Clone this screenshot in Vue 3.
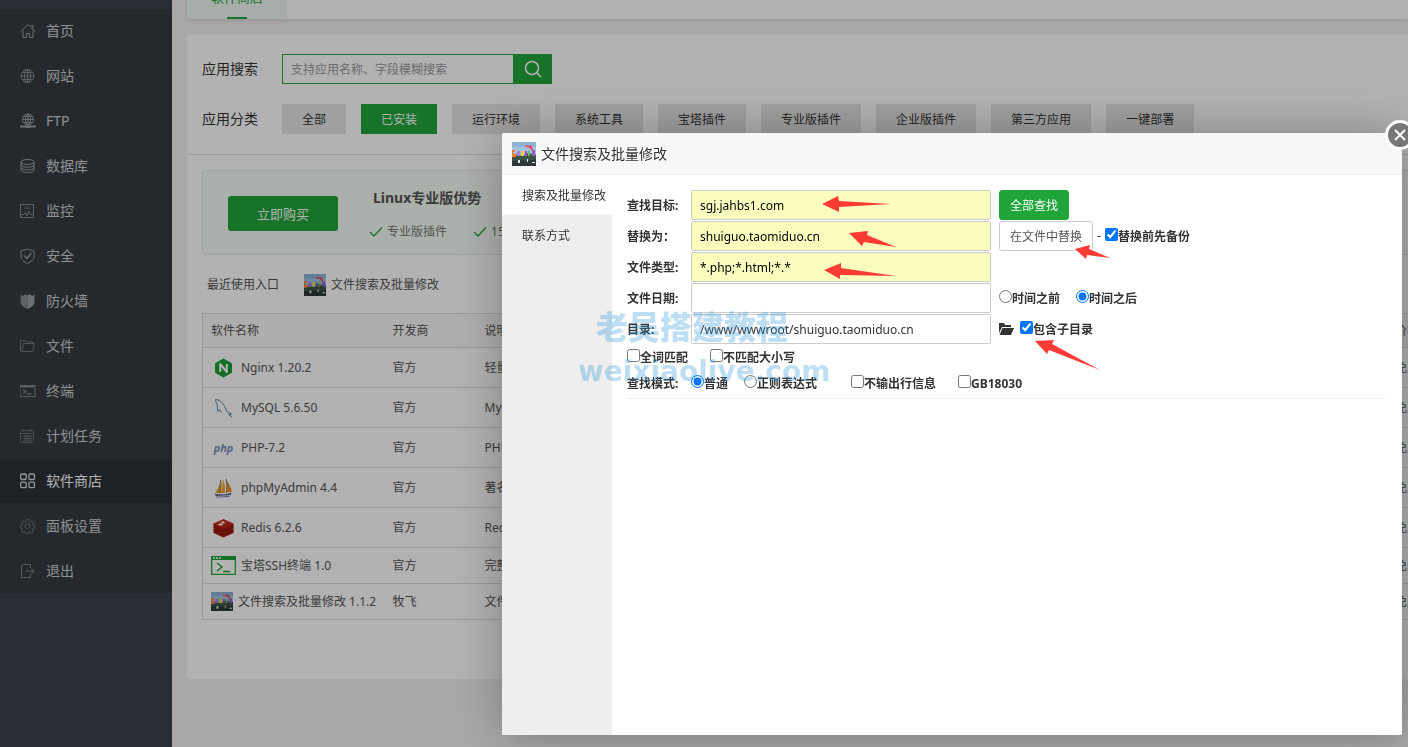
<script setup>
import { ref } from 'vue'

const menu = [
  { icon: 'home', text: '首页' },
  { icon: 'globe', text: '网站' },
  { icon: 'ftp', text: 'FTP' },
  { icon: 'database', text: '数据库' },
  { icon: 'monitor', text: '监控' },
  { icon: 'shield', text: '安全' },
  { icon: 'firewall', text: '防火墙' },
  { icon: 'folder', text: '文件' },
  { icon: 'terminal', text: '终端' },
  { icon: 'calendar', text: '计划任务' },
  { icon: 'apps', text: '软件商店', active: true },
  { icon: 'gear', text: '面板设置' },
  { icon: 'exit', text: '退出' }
]

const categories = ['全部', '已安装', '运行环境', '系统工具', '宝塔插件', '专业版插件', '企业版插件', '第三方应用', '一键部署']
const activeCategory = ref('已安装')

const software = [
  { icon: 'nginx', name: 'Nginx 1.20.2', vendor: '官方', desc: '轻量级，占有内存少，并发能力强' },
  { icon: 'mysql', name: 'MySQL 5.6.50', vendor: '官方', desc: 'MySQL是一种关系数据库管理系统!' },
  { icon: 'php', name: 'PHP-7.2', vendor: '官方', desc: 'PHP是世界上最好的编程语言' },
  { icon: 'pma', name: 'phpMyAdmin 4.4', vendor: '官方', desc: '著名Web端MySQL管理工具' },
  { icon: 'redis', name: 'Redis 6.2.6', vendor: '官方', desc: 'Redis 是一个高性能的key-value数据库' },
  { icon: 'ssh', name: '宝塔SSH终端 1.0', vendor: '官方', desc: '完整功能的SSH客户端', slim: true },
  { icon: 'photo', name: '文件搜索及批量修改 1.1.2', vendor: '牧飞', desc: '文件搜索及批量修改', slim: true }
]

const find = ref('sgj.jahbs1.com')
const replace = ref('shuiguo.taomiduo.cn')
const types = ref('*.php;*.html;*.*')
const date = ref('')
const dir = ref('/www/wwwroot/shuiguo.taomiduo.cn')
const backup = ref(true)
const subdirs = ref(true)
const when = ref('after')
const whole = ref(false)
const ignoreCase = ref(false)
const mode = ref('plain')
const noLines = ref(false)
const gb = ref(false)
</script>

<template>
  <svg class="defs" aria-hidden="true">
    <symbol id="photo" viewBox="0 0 24 24" preserveAspectRatio="none">
      <rect width="24" height="24" fill="#8fb4d6" />
      <rect y="5" width="24" height="6" fill="#a3c3dd" />
      <path d="M0 15l5-2 6 1 5-3 8 2v11H0z" fill="#3d5546" />
      <path d="M0 19l8-1 7 1 9-2v7H0z" fill="#2b3a38" />
      <path d="M0 8h3v2H1v2h3v3H0z" fill="#ff7a2e" />
      <path d="M5 9h3v5H5z" fill="#b07cd8" />
      <path d="M9 9h3v5H9z" fill="#e0d83e" />
      <path d="M13 9h2v5h-2z" fill="#a64bd0" />
      <path d="M16 9h2v5h-2z" fill="#52c45a" />
      <path d="M20 8h3v6h-3z" fill="#9c55cf" />
      <path d="M13 4l2-1 2 1 2-1 1 2 1 3-1 1-2-3-4-1z" fill="#e8455e" />
      <path d="M6 18h2v3H6zM15 17h1v3h-1zM20 20h3v1h-3z" fill="#e8eeee" />
    </symbol>
  </svg>

  <div class="page">
    <nav class="sidebar">
      <ul>
        <li v-for="m in menu" :key="m.text">
          <a href="#" :class="{ active: m.active }">
            <svg viewBox="0 0 16 16" width="16" height="16" fill="none" stroke="currentColor">
              <template v-if="m.icon === 'home'">
                <path d="M1 8.500L8 1.500l7 7M11 2.500h2v3M3 7.500V14.500h3.500V10.500h3V14.500H13V7.500" />
              </template>
              <template v-else-if="m.icon === 'globe'">
                <g opacity=".8"><circle cx="7.500" cy="8" r="6.500" />
                <ellipse cx="7.500" cy="8" rx="3" ry="6.500" />
                <path d="M1 8h13M7.500 1.500v13M2.500 4.500h10M2.500 11.500h10" /></g>
              </template>
              <template v-else-if="m.icon === 'ftp'">
                <circle cx="8" cy="6.500" r="5.500" />
                <ellipse cx="8" cy="6.500" rx="2.500" ry="5.500" />
                <path d="M2.500 6.500h11M8 1v11M3.500 3.500h9M3.500 9.500h9" />
                <path d="M0 13.500h16M6 14h4" stroke-width="2" />
              </template>
              <template v-else-if="m.icon === 'database'">
                <ellipse cx="7.500" cy="4" rx="6.500" ry="2.500" />
                <path d="M1 4v8c0 3.300 13 3.300 13 0V4M1 6.700c0 3.300 13 3.300 13 0M1 9.400c0 3.300 13 3.300 13 0" />
              </template>
              <template v-else-if="m.icon === 'monitor'">
                <g opacity=".8"><rect x="0.500" y="1.500" width="13" height="13" />
                <path d="M4 4h6M4 5.500h6" opacity=".5" />
                <path d="M1 11.500h3l1.500-2 1.500 3.500 2-5 1.500 3.500H13" /></g>
              </template>
              <template v-else-if="m.icon === 'shield'">
                <path d="M7.500 1L14 3v5c0 3.500-3 6-6.500 7.500C4 14 1 11.500 1 8V3z" />
                <path d="M4 7.500l3 3L11.500 5" stroke-width="1.500" />
              </template>
              <template v-else-if="m.icon === 'firewall'">
                <path d="M7.500 16C3 14 .500 12 .500 8.500V2h1.500v1h1.500V2H5V1h1V2h1.500z" fill="currentColor" stroke="none" opacity=".8" />
                <path d="M7.500 16C12 14 14.500 12 14.500 8.500V2H13v1h-1.500V2H10V1H9V2H7.500z" fill="currentColor" stroke="none" />
              </template>
              <template v-else-if="m.icon === 'folder'">
                <g opacity=".6"><path d="M2 13.500H12.500L14.500 5.500H3.500L2 13.500L.500 13V2.500H5L6.500 4H12.500V5.500" /></g>
              </template>
              <template v-else-if="m.icon === 'terminal'">
                <g opacity=".75"><rect x="0" y="2.500" width="15" height="11" /><path d="M0 3.500h15" stroke-width="2" /><path d="M3 6.500l3 2-3 2M7 11h4" stroke-width="1.300" /></g>
              </template>
              <template v-else-if="m.icon === 'calendar'">
                <g opacity=".5"><rect x=".500" y="2.500" width="13" height="12" rx="1" /><path d="M.500 5.500h13M3.500 1v3M10.500 1v3M3 8h9M3 10.500h9M3 13h9M5 7v6M7.500 7v6M10 7v6" /></g>
              </template>
              <template v-else-if="m.icon === 'apps'">
                <g stroke-width="1.300"><rect x=".700" y="1" width="5.500" height="5.500" rx="1.200" /><rect x="9" y="1" width="5.500" height="5.500" rx="1.200" /><rect x=".700" y="9.200" width="5.500" height="5.500" rx="1.200" /><rect x="9" y="9.200" width="5.500" height="5.500" rx="1.200" /></g>
              </template>
              <template v-else-if="m.icon === 'gear'">
                <g opacity=".6"><circle cx="7.500" cy="8" r="2.500" /><path d="M6.300 1.500h2.400l.4 1.700 1.500.7 1.500-1 1.500 1.600-.9 1.500.6 1.500 1.500.3v2.300l-1.700.4-.6 1.300.9 1.500-1.600 1.500-1.400-.9-1.500.6-.3 1.500H6.300l-.4-1.600-1.400-.6-1.500.9-1.600-1.600 1-1.500-.6-1.400-1.500-.4V8l1.600-.5.7-1.500-1-1.400L3.200 3l1.400.9 1.400-.7z" /></g>
              </template>
              <template v-else>
                <g opacity=".7"><path d="M10.500 5V1.500H3L1.500 3V14.500H10.500V11M5.500 8h8M11.500 5.500L14 8l-2.500 2.500" /></g>
              </template>
            </svg>
            <span>{{ m.text }}</span>
          </a>
        </li>
      </ul>
    </nav>

    <main class="content">
      <div class="tabs">
        <a href="#" class="tab">软件商店</a>
      </div>

      <section class="card">
        <div class="filters">
          <div class="filter">
            <label for="app-search" class="filter-label">应用搜索</label>
            <div class="search">
              <input id="app-search" type="text" placeholder="支持应用名称、字段模糊搜索" />
              <button type="button" aria-label="搜索">
                <svg viewBox="0 0 18 18" width="18" height="18" fill="none" stroke="#fff" stroke-width="1.600">
                  <circle cx="8" cy="8" r="6.500" /><path d="M12.500 12.500L17 17" />
                </svg>
              </button>
            </div>
          </div>
          <div class="filter">
            <span class="filter-label">应用分类</span>
            <div class="cats">
              <button v-for="c in categories" :key="c" type="button" :class="{ on: c === activeCategory }" @click="activeCategory = c">{{ c }}</button>
            </div>
          </div>
        </div>

        <div class="body">
          <div class="promo">
            <button type="button" class="buy">立即购买</button>
            <div class="perks">
              <h3>Linux专业版优势</h3>
              <ul>
                <li v-for="p in ['专业版插件', '15天无理由退款', '可更换IP']" :key="p">
                  <svg viewBox="0 0 14 12" width="14" height="12" fill="none" stroke="#20a53a" stroke-width="1.300"><path d="M1 6l4 4L13 1.500" /></svg>{{ p }}
                </li>
              </ul>
            </div>
          </div>

          <div class="recent">
            <span>最近使用入口</span>
            <a href="#"><svg width="22" height="22"><use href="#photo" /></svg>文件搜索及批量修改</a>
          </div>

          <table>
            <colgroup><col class="c-name" /><col class="c-vendor" /><col /><col class="c-price" /></colgroup>
            <thead>
              <tr><th>软件名称</th><th>开发商</th><th>说明</th><th>价格</th></tr>
            </thead>
            <tbody>
              <tr v-for="s in software" :key="s.name" :class="{ slim: s.slim }">
                <td>
                  <a href="#" class="soft">
                    <svg v-if="s.icon === 'nginx'" class="logo" viewBox="0 0 24 24">
                      <path d="M12 3l8 4.500v9L12 21l-8-4.500v-9z" fill="#1ba035" stroke="#1ba035" stroke-linejoin="round" />
                      <path d="M8.700 16V8l6.600 8V8" fill="none" stroke="#fff" stroke-width="2" stroke-linejoin="round" />
                    </svg>
                    <svg v-else-if="s.icon === 'mysql'" class="logo" viewBox="0 0 24 24" fill="none" stroke="#4d87a8">
                      <path d="M4 3.500c3 0 6 2 8 5 1.500 2 2 5 4 7.500l4 2-3 .5 3.500 2.500M4 3.500c0 3 2 4 2 6.500s-.5 4 .5 5.500l1.500-2 2 3" />
                    </svg>
                    <svg v-else-if="s.icon === 'php'" class="logo php" viewBox="0 0 24 24" aria-hidden="true">
                      <text x="12" y="16" text-anchor="middle">php</text>
                    </svg>
                    <svg v-else-if="s.icon === 'pma'" class="logo" viewBox="0 0 24 24">
                      <path d="M9 4c-1 6-3 9-5 13h6z" fill="#f29b12" />
                      <path d="M11 2.500c2 4 3 8 2.500 14.500H9.500C11 12 11.500 8 11 2.500z" fill="#f5a21a" />
                      <path d="M14.500 3.500c3 4 5 8 6 12l-5 1c.5-5 0-9-1-13z" fill="#e8930e" />
                      <path d="M9 4c1 4 .5 9-1 13M14.500 3c1 4 1 9 .5 14" fill="none" stroke="#777" />
                      <path d="M3 17.500c6 1.500 12 1 17-1-.5 2-1.500 3.500-3 4.500l-12 .5z" fill="#62628f" />
                      <path d="M5 20.500l14-1" stroke="#ddd" />
                    </svg>
                    <svg v-else-if="s.icon === 'redis'" class="logo" viewBox="0 0 24 24">
                      <path d="M2 7l10 4 10-4v10l-10 4.500L2 17z" fill="#a41e11" />
                      <path d="M2 7.500L12 3l10 4.500L12 12z" fill="#c4281c" />
                      <path d="M2 11l10 4.500L22 11M2 14.500L12 19l10-4.500" fill="none" stroke="#7d120a" />
                      <path d="M9 6l4-1-1 1.500 3 .5-4 .5z" fill="#fff" /><ellipse cx="9" cy="8.500" rx="2.500" ry="1" fill="#fff" />
                    </svg>
                    <svg v-else-if="s.icon === 'ssh'" class="logo" viewBox="0 0 25 19" width="25" height="19" fill="none" stroke="#20a53a">
                      <rect x=".500" y=".500" width="24" height="18" stroke-width="1.500" /><path d="M0 2h25" stroke-width="4" />
                      <path d="M2 2h8" stroke="#fff" stroke-dasharray="2 1" stroke-width="1.500" /><path d="M6 7l5 4-5 4M12 15.500h7" stroke-width="1.500" />
                    </svg>
                    <svg v-else class="logo thumb"><use href="#photo" /></svg>
                    {{ s.name }}
                  </a>
                </td>
                <td>{{ s.vendor }}</td>
                <td>{{ s.desc }}</td>
                <td>免费</td>
              </tr>
            </tbody>
          </table>
        </div>
      </section>
    </main>

    <div class="overlay">
      <div class="dialog" role="dialog" aria-labelledby="dlg-title">
        <header>
          <svg width="24" height="24"><use href="#photo" /></svg>
          <span id="dlg-title">文件搜索及批量修改</span>
        </header>
        <button type="button" class="close" aria-label="关闭">
          <svg viewBox="0 0 12 12" width="12" height="12" stroke="#fff" stroke-width="2" stroke-linecap="round"><path d="M1.500 1.500l9 9M10.500 1.500l-9 9" /></svg>
        </button>
        <div class="dialog-body">
          <nav class="side">
            <a href="#" class="on">搜索及批量修改</a>
            <a href="#">联系方式</a>
          </nav>
          <form @submit.prevent>
            <div class="row">
              <label class="name" for="f-find">查找目标:</label>
              <input id="f-find" v-model="find" type="text" class="text filled" />
              <button type="button" class="btn primary">全部查找</button>
            </div>
            <div class="row">
              <label class="name" for="f-replace">替换为：</label>
              <input id="f-replace" v-model="replace" type="text" class="text filled" />
              <button type="button" class="btn">在文件中替换</button>
              <span class="dash">-</span>
              <label class="check"><input v-model="backup" type="checkbox" />替换前先备份</label>
            </div>
            <div class="row">
              <label class="name" for="f-types">文件类型:</label>
              <input id="f-types" v-model="types" type="text" class="text filled" />
            </div>
            <div class="row">
              <label class="name" for="f-date">文件日期:</label>
              <input id="f-date" v-model="date" type="text" class="text" />
              <div class="options">
                <label class="check"><input v-model="when" type="radio" name="when" value="before" />时间之前</label>
                <label class="check"><input v-model="when" type="radio" name="when" value="after" />时间之后</label>
              </div>
            </div>
            <div class="row">
              <label class="name" for="f-dir">目录:</label>
              <input id="f-dir" v-model="dir" type="text" class="text" />
              <svg class="open" viewBox="0 0 15 12" width="15" height="12" fill="#333"><path d="M0 0h5l1 2h6v2H3L0 10z" /><path d="M3.500 5H15l-3 7H.500z" /></svg>
              <label class="check"><input v-model="subdirs" type="checkbox" />包含子目录</label>
            </div>
            <div class="line first">
              <label class="check"><input v-model="whole" type="checkbox" />全词匹配</label>
              <label class="check wide"><input v-model="ignoreCase" type="checkbox" />不匹配大小写</label>
            </div>
            <div class="line">
              <span class="name">查找模式:</span>
              <div class="options">
                <label class="check"><input v-model="mode" type="radio" name="mode" value="plain" />普通</label>
                <label class="check"><input v-model="mode" type="radio" name="mode" value="regex" />正则表达式</label>
              </div>
              <label class="check far"><input v-model="noLines" type="checkbox" />不输出行信息</label>
              <label class="check wide"><input v-model="gb" type="checkbox" />GB18030</label>
            </div>
            <hr />
          </form>
        </div>

        <div class="mark cn">老吴搭建教程</div>
        <div class="mark en">weixiaolive.com</div>
        <svg class="arrows" viewBox="0 0 900 602" width="900" height="602" fill="#ff3b36" aria-hidden="true">
          <path d="M320 71L336 63L337 68L389 71L337 74L337 79Z" />
          <path d="M347 100L366 98L365 102L394 114L362 109L360 113Z" />
          <path d="M322 137L339 130L339 135L394 143L338 142L338 146Z" />
          <path d="M573 116L588 112L587 116L608 125L585 122L584 126Z" />
          <path d="M533 208L552 207L550 211L598 237L547 217L545 221Z" />
        </svg>
      </div>
    </div>
  </div>
</template>

<style>
body {
  margin: 0;
  overflow: hidden;
}
</style>

<style scoped>
* {
  box-sizing: border-box;
}

.defs {
  position: absolute;
  width: 0;
  height: 0;
}

.page {
  display: flex;
  height: 100vh;
  overflow: hidden;
  background: #f1f1f1;
  color: #555;
  font: 12px/20px "Noto Sans", "Noto Sans CJK SC", sans-serif;
}

button,
input {
  font: inherit;
}

a {
  color: inherit;
  text-decoration: none;
}

ul {
  margin: 0;
  padding: 0;
  list-style: none;
}

.sidebar {
  flex: 0 0 172px;
  padding-top: 9px;
  background: #3c444d;
}

.sidebar ul {
  background: #353c43;
}

.sidebar li {
  padding-bottom: 1px;
}

.sidebar li:last-child {
  padding-bottom: 0;
}

.sidebar a {
  display: flex;
  align-items: center;
  gap: 10px;
  height: 44px;
  padding-left: 20px;
  color: #cdcfd1;
  font-size: 14px;
}

.sidebar svg {
  color: #9a9fa4;
}

.sidebar a.active {
  background: #2c3138;
  color: #fff;
}

.sidebar a.active svg {
  color: #d8dadc;
}

.content {
  flex: 1;
  min-width: 0;
  margin-left: 15px;
}

.tabs {
  height: 50px;
  margin-top: -31px;
  border-radius: 4px 0 0 4px;
  background: #fff;
  box-shadow: 0 2px 4px rgba(0, 0, 0, 0.1);
}

.tab {
  display: flex;
  flex-direction: column;
  justify-content: flex-end;
  align-items: center;
  gap: 10px;
  width: 100px;
  height: 50px;
  border-radius: 4px 0 0 4px;
  background: #f0faf3;
  color: #20a53a;
  font-size: 13px;
}

.tab::after {
  content: "";
  width: 20px;
  height: 2px;
  background: #20a53a;
}

.card {
  margin-top: 15px;
  padding-bottom: 59px;
  border-radius: 4px 0 0 4px;
  background: #fff;
}

.filters {
  display: flex;
  flex-direction: column;
  gap: 20px;
  padding: 20px 0 20px 15px;
  border-bottom: 1px solid #ddd;
}

.filter {
  display: flex;
  align-items: center;
}

.filter-label {
  flex: 0 0 80px;
  color: #333;
  font-size: 14px;
}

.search {
  display: flex;
}

.search input {
  width: 231px;
  height: 30px;
  padding: 1px 8px 0;
  border: 1px solid #20a53a;
  border-right: 0;
  border-radius: 0;
  background: #fff;
  outline: 0;
}

.search input::placeholder {
  color: #999;
}

.search button {
  display: grid;
  place-items: center;
  width: 39px;
  height: 30px;
  padding: 0;
  border: 0;
  background: #20a53a;
}

.cats {
  display: flex;
  gap: 15px;
}

.cats button {
  height: 30px;
  padding: 2px 20px 0;
  border: 0;
  background: #e6e6e6;
  color: #333;
  white-space: nowrap;
}

.cats button.on {
  background: #20a53a;
  color: #fff;
}

.body {
  padding: 15px 0 0 15px;
}

.promo {
  display: flex;
  align-items: center;
  gap: 35px;
  height: 85px;
  padding: 2px 0 0 25px;
  border: 1px solid #e3ebe8;
  border-right: 0;
  border-radius: 4px 0 0 4px;
  background: #f7fcf6;
}

.buy {
  width: 110px;
  height: 35px;
  border: 0;
  border-radius: 3px;
  background: #20a53a;
  color: #fff;
  font-size: 13px;
}

.perks {
  padding-top: 2px;
}

.perks h3 {
  margin: 0 0 14px;
  font-size: 14px;
  font-weight: 700;
}

.perks ul {
  display: flex;
  gap: 26px;
  margin-left: -4px;
  color: #777;
}

.perks li {
  display: flex;
  align-items: center;
  gap: 4px;
  white-space: nowrap;
}

.recent {
  display: flex;
  align-items: center;
  gap: 25px;
  height: 58px;
  padding: 2px 0 0 5px;
}

.recent a {
  display: flex;
  align-items: center;
  gap: 5px;
}

table {
  width: 100%;
  border-collapse: collapse;
  table-layout: fixed;
  border: 1px solid #ddd;
  border-right: 0;
}

.c-name {
  width: 182px;
}

.c-vendor {
  width: 92px;
}

.c-price {
  width: 21px;
}

th,
td {
  height: 40px;
  padding: 0 0 0 8px;
  border-bottom: 1px solid #ddd;
  font-weight: 400;
  text-align: left;
  white-space: nowrap;
  overflow: hidden;
}

th {
  height: 34px;
  background: #f9f9f9;
}

.slim td {
  height: 36px;
}

.soft {
  display: flex;
  align-items: center;
  gap: 5px;
}

.logo {
  flex: none;
  width: 25px;
  height: 24px;
}

.slim .logo {
  height: 19px;
}

.slim .thumb {
  width: 22px;
}

.php text {
  fill: #7b8fb8;
  font: italic 700 11px "Open Sans", sans-serif;
}

.overlay {
  position: fixed;
  inset: 0;
  display: flex;
  padding: 133px 6px 12px 502px;
  background: rgba(0, 0, 0, 0.3);
}

.dialog {
  position: relative;
  display: flex;
  flex: 1;
  flex-direction: column;
  min-width: 0;
  border-radius: 2px;
  background: #fff;
  box-shadow: 1px 1px 50px rgba(0, 0, 0, 0.3);
  color: #333;
}

.dialog header {
  display: flex;
  align-items: center;
  gap: 5px;
  height: 42px;
  padding-left: 10px;
  border-bottom: 1px solid #eee;
  border-radius: 2px 2px 0 0;
  background: #f7f7f7;
  font-size: 14px;
}

.close {
  position: absolute;
  top: -13px;
  right: -13px;
  display: grid;
  place-items: center;
  width: 30px;
  height: 30px;
  padding: 0;
  border: 3px solid #fff;
  border-radius: 50%;
  background: #777;
}

.dialog-body {
  display: flex;
  flex: 1;
}

.side {
  flex: 0 0 110px;
  background: #eee;
}

.side a {
  display: block;
  height: 40px;
  padding-left: 20px;
  line-height: 42px;
  white-space: nowrap;
}

.side a.on {
  background: #fff;
}

form {
  flex: 1;
  min-width: 0;
  padding: 15px 17px 0 15px;
  font-weight: 700;
}

.row {
  display: flex;
  align-items: center;
  height: 30px;
  margin-bottom: 1px;
}

.name {
  flex: 0 0 64px;
  padding-top: 2px;
}

.text {
  width: 300px;
  height: 30px;
  margin: 0 8px 0 0;
  padding: 0 8px;
  border: 1px solid #ccc;
  border-radius: 2px;
  background: #fff;
  color: #333;
  font-weight: 400;
  outline: 0;
}

.filled {
  background: #fafdbe;
  color: #000;
}

.btn {
  height: 30px;
  padding: 2px 10px 0;
  border: 1px solid #ccc;
  border-radius: 3px;
  background: #fff;
  color: #555;
  font-weight: 400;
}

.primary {
  border-color: #20a53a;
  background: #20a53a;
  color: #fff;
}

.dash {
  padding: 0 4px;
  font-weight: 400;
}

.check {
  display: flex;
  align-items: center;
  padding-top: 2px;
  white-space: nowrap;
}

.check input {
  width: 13px;
  height: 13px;
  margin: 0 0 5px;
}

.options {
  display: flex;
  gap: 16px;
}

.open {
  margin-right: 6px;
}

.line {
  display: flex;
  align-items: center;
  height: 26px;
}

.first {
  margin-top: -1px;
}

.wide {
  margin-left: 22px;
}

.far {
  margin-left: 34px;
}

hr {
  height: 1px;
  margin: 2px 0 0;
  border: 0;
  background: #eee;
}

.mark {
  position: absolute;
  color: #2a93dc;
  font-weight: 700;
  opacity: 0.3;
  pointer-events: none;
  white-space: nowrap;
}

.cn {
  top: 174px;
  left: 94px;
  font-size: 32px;
  font-weight: 900;
  line-height: 40px;
}

.en {
  top: 219px;
  left: 76px;
  font-family: "DejaVu Sans", sans-serif;
  font-size: 28px;
  line-height: 40px;
}

.arrows {
  position: absolute;
  top: 0;
  left: 0;
  pointer-events: none;
}
</style>
